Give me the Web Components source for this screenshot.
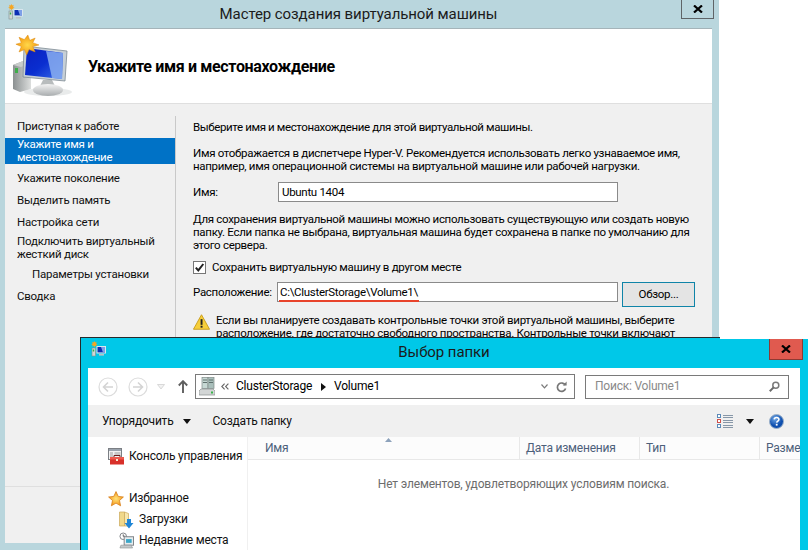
<!DOCTYPE html>
<html lang="ru">
<head>
<meta charset="utf-8">
<title>Мастер создания виртуальной машины</title>
<style>
  html, body { margin: 0; height: 100%; background: #fff; overflow: hidden; }
  body { position: relative; width: 808px; height: 550px; font: 11.5px/13px Roboto, "Open Sans", sans-serif; letter-spacing: -.3px; color: #000; }
</style>
</head>
<body>
<template id="wizard-tpl">
  <style>
    :host { position: absolute; left: 0; top: 0; width: 719px; height: 550px; box-sizing: border-box; display: flex; flex-direction: column; background: #b9d6dd; padding: 0 7px 7px 5px; }
    .title { height: 28px; flex: none; display: flex; align-items: center; justify-content: center; position: relative; font-size: 15px; letter-spacing: -.08px; color: #1b1b1b; }
    .app { position: absolute; left: 3px; top: 4px; }
    .close { position: absolute; right: -2px; top: 0; width: 33px; height: 19px; box-sizing: border-box; border: 1px solid #5f6467; border-top: 0; display: flex; align-items: center; justify-content: center; }
    .client { flex: 1; display: flex; flex-direction: column; border-top: 1px solid #a5b4b9; background: #f0f0f0; }
    header { height: 74px; flex: none; background: #fff; border-bottom: 1px solid #dfdfdf; display: flex; align-items: center; padding-left: 7px; font: bold 16px/18px Roboto, sans-serif; letter-spacing: -.35px; }
    .body { flex: 1; display: flex; padding-top: 12px; border-bottom: 1px solid #dfdfdf; margin-bottom: 56px; }
    nav { width: 170px; flex: none; padding-top: 4px; }
    main { flex: 1; border-left: 1px solid #c9c9c9; padding: 5px 0 0 17px; }
  </style>
  <div class="title">
    <ui-icon class="app" name="vm-small"></ui-icon>
    Мастер создания виртуальной машины
    <div class="close"><ui-icon name="close"></ui-icon></div>
  </div>
  <div class="client">
    <header><ui-icon name="vm-large" style="margin-top:-1px"></ui-icon><span style="margin:2px 0 0 14px">Укажите имя и местонахождение</span></header>
    <div class="body">
      <nav><slot name="nav"></slot></nav>
      <main><slot></slot></main>
    </div>
  </div>
</template>

<template id="nav-tpl">
  <style>
    :host { display: block; width: 170px; box-sizing: border-box; padding: 0 4px 0 12px; line-height: 13px; letter-spacing: -.22px; color: #111; white-space: nowrap; }
    :host([selected]) { background: #0072c6; color: #fff; }
    :host([sub]) { padding-left: 27px; }
  </style>
  <slot></slot>
</template>

<template id="field-tpl">
  <style>
    :host { display: flex; align-items: flex-start; }
    label { width: 85px; flex: none; line-height: 20px; }
    .box { width: 340px; height: 20px; box-sizing: border-box; border: 1px solid #8a8a8a; background: #fff; padding-left: 3px; line-height: 18px; position: relative; white-space: nowrap; }
    .extra { margin-left: 4px; }
    :host([wide]) label { width: 84px; }
    :host([wide]) .box { width: 341px; padding-left: 2px; }
  </style>
  <label><slot name="label"></slot></label>
  <div class="box"><slot></slot></div>
  <div class="extra"><slot name="extra"></slot></div>
</template>

<template id="folder-tpl">
  <style>
    :host { position: absolute; left: 80px; top: 337px; width: 728px; height: 213px; box-sizing: border-box; display: flex; flex-direction: column; background: #00c8e8; padding: 1px 8px 0 7px; border-left: 1px solid #252a2c; font-size: 12px; letter-spacing: -.22px; }
    .edge { position: absolute; left: 0; top: 0; width: 639px; height: 1px; background: #252a2c; }
    .blank { position: absolute; left: 639px; top: 0; right: 0; height: 2px; background: #fff; }
    .title { height: 30px; flex: none; display: flex; align-items: center; justify-content: center; position: relative; font-size: 15px; letter-spacing: -.08px; color: #1b1b1b; padding-bottom: 1px; box-sizing: border-box; }
    .app { position: absolute; left: 3px; top: 3px; }
    .close { position: absolute; right: -3px; top: 1px; width: 34px; height: 21px; box-sizing: border-box; background: #e05a4f; border: 1px solid #8d3a33; border-top: 0; display: flex; align-items: center; justify-content: center; }
    .client { flex: 1; background: #fff; display: flex; flex-direction: column; min-height: 0; }
    .nav { height: 37px; flex: none; display: flex; align-items: center; padding-left: 10px; }
    .nav .fwd { margin-left: 10px; }
    .nav .drop { margin-left: 9px; }
    .nav .up { margin-left: 13px; margin-right: 7px; }
    .addr { width: 380px; height: 25px; box-sizing: border-box; border: 1px solid #7a7a7a; display: flex; align-items: center; padding-left: 3px; }
    .addr .t { margin-left: 7px; }
    .addr .sp { flex: 1; }
    .search { width: 204px; height: 24px; box-sizing: border-box; border: 1px solid #7a7a7a; margin-left: 10px; display: flex; align-items: center; justify-content: space-between; padding: 0 8px 0 9px; color: #8a8a8a; }
    .cmd { height: 32px; flex: none; background: #f0f0f0; display: flex; align-items: center; padding-left: 14px; color: #111; }
    .cmd .tri { margin-left: 10px; margin-right: 21px; }
    .cmd .right { margin-left: auto; display: flex; align-items: center; padding-right: 16px; }
    .panes { flex: 1; display: flex; min-height: 0; }
    .tree { width: 159px; flex: none; border-right: 1px solid #f0f0f0; overflow: hidden; }
    .list { flex: 1; min-width: 0; position: relative; overflow: hidden; }
    .cols { display: flex; height: 23px; box-sizing: border-box; border-bottom: 1px solid #e8e8e8; background: #fcfcfc; color: #4c607a; }
    .empty { text-align: center; margin-top: 18px; color: #6d6d6d; padding-right: 1px; letter-spacing: -.16px; }
    .sort { position: absolute; left: 137px; top: 1px; }
  </style>
  <div class="edge"></div><div class="blank"></div>
  <div class="title">
    <ui-icon class="app" name="vm-small"></ui-icon>
    Выбор папки
    <div class="close"><ui-icon name="close"></ui-icon></div>
  </div>
  <div class="client">
    <div class="nav">
      <ui-icon name="back"></ui-icon>
      <ui-icon class="fwd" name="forward"></ui-icon>
      <ui-icon class="drop" name="drop"></ui-icon>
      <ui-icon class="up" name="up"></ui-icon>
      <div class="addr">
        <ui-icon name="server"></ui-icon>
        <ui-icon name="chevrons" style="margin-left:6px"></ui-icon>
        <span class="t">ClusterStorage</span>
        <ui-icon name="crumb" style="margin:0 8px 0 9px"></ui-icon>
        <span>Volume1</span>
        <span class="sp"></span>
        <ui-icon name="chevron"></ui-icon>
        <ui-icon name="refresh" style="margin:0 7px 0 8px"></ui-icon>
      </div>
      <div class="search"><span>Поиск: Volume1</span><ui-icon name="search"></ui-icon></div>
    </div>
    <div class="cmd">
      <span>Упорядочить</span><ui-icon class="tri" name="tri"></ui-icon><span>Создать папку</span>
      <div class="right">
        <ui-icon name="views"></ui-icon>
        <ui-icon name="tri" style="margin:0 15px 0 13px"></ui-icon>
        <ui-icon name="help"></ui-icon>
      </div>
    </div>
    <div class="panes">
      <div class="tree"><slot name="tree"></slot></div>
      <div class="list">
        <ui-icon class="sort" name="sort"></ui-icon>
        <div class="cols"><slot name="cols"></slot></div>
        <div class="empty"><slot></slot></div>
      </div>
    </div>
  </div>
</template>

<template id="col-tpl">
  <style>
    :host { display: block; flex: none; box-sizing: border-box; border-right: 1px solid #e8e8e8; padding: 5px 0 0 6px; white-space: nowrap; overflow: hidden; }
    :host(:last-child) { border-right: 0; }
  </style>
  <slot></slot>
</template>

<template id="tree-tpl">
  <style>
    :host { display: flex; align-items: center; height: 21px; white-space: nowrap; padding-left: 20px; color: #111; }
    :host([child]) { padding-left: 31px; }
    ui-icon { margin-right: 5px; }
  </style>
  <ui-icon></ui-icon><slot></slot>
</template>

<vm-wizard>
  <nav-item slot="nav">Приступая к работе</nav-item>
  <nav-item slot="nav" selected style="margin-top:5px">Укажите имя и<br>местонахождение</nav-item>
  <nav-item slot="nav" style="margin-top:8px">Укажите поколение</nav-item>
  <nav-item slot="nav" style="margin-top:9px">Выделить память</nav-item>
  <nav-item slot="nav" style="margin-top:9px">Настройка сети</nav-item>
  <nav-item slot="nav" style="margin-top:6px">Подключить виртуальный<br>жесткий диск</nav-item>
  <nav-item slot="nav" sub style="margin-top:7px">Параметры установки</nav-item>
  <nav-item slot="nav" style="margin-top:9px">Сводка</nav-item>

  <div style="margin:0 0 13px;letter-spacing:-.38px">Выберите имя и местонахождение для этой виртуальной машины.</div>
  <div style="margin:0 0 9px;white-space:nowrap">Имя отображается в диспетчере Hyper-V. Рекомендуется использовать легко узнаваемое имя,<br>например, имя операционной системы на виртуальной машине или рабочей нагрузки.</div>
  <form-field><span slot="label">Имя:</span>Ubuntu 1404</form-field>
  <div style="margin:11px 0 9px;white-space:nowrap">Для сохранения виртуальной машины можно использовать существующую или создать новую<br>папку. Если папка не выбрана, виртуальная машина будет сохранена в папке по умолчанию для<br>этого сервера.</div>
  <div style="display:flex;align-items:center;height:13px;margin-bottom:8px"><ui-icon name="check" style="margin-right:6px"></ui-icon>Сохранить виртуальную машину в другом месте</div>
  <form-field wide>
    <span slot="label">Расположение:</span>
    C:\ClusterStorage\Volume1\
    <red-mark></red-mark>
    <push-button slot="extra">Обзор...</push-button>
  </form-field>
  <div style="display:flex;margin-top:7px;white-space:nowrap"><ui-icon name="warn" style="margin-right:6px"></ui-icon><span>Если вы планируете создавать контрольные точки этой виртуальной машины, выберите<br>расположение, где достаточно свободного пространства. Контрольные точки включают</span></div>
</vm-wizard>

<folder-picker>
  <tree-item slot="tree" icon="console" style="margin-top:9px">Консоль управления</tree-item>
  <tree-item slot="tree" icon="star" style="margin-top:21px">Избранное</tree-item>
  <tree-item slot="tree" icon="downloads" child>Загрузки</tree-item>
  <tree-item slot="tree" icon="recent" child>Недавние места</tree-item>
  <col-head slot="cols" style="width:272px;padding-left:17px">Имя</col-head>
  <col-head slot="cols" style="width:120px">Дата изменения</col-head>
  <col-head slot="cols" style="width:120px">Тип</col-head>
  <col-head slot="cols" style="width:40px">Разме</col-head>
  Нет элементов, удовлетворяющих условиям поиска.
</folder-picker>

<script>
const ICONS = {
  close: `<svg width="10" height="8" viewBox="0 0 10 8"><path d="M1 .5 9 7.5M9 .5 1 7.5" stroke="#000" stroke-width="2.2" fill="none"/></svg>`,
  "vm-small": `<svg width="16" height="16" viewBox="0 0 16 16"><path d="M3 0l1 2 2-1-1 2 2 1-2 1 1 2-2-1-1 2-1-2-2 1 1-2-2-1 2-1-1-2 2 1z" fill="#f5a623" transform="translate(1 0) scale(.8)"/><rect x="1" y="7" width="3.5" height="8" fill="#cfd6d6" stroke="#80908e" stroke-width=".6"/><rect x="1.8" y="8.5" width="1.4" height="2" fill="#36b24a"/><rect x="5.5" y="5" width="9.5" height="7.5" fill="#d8e6ee"/><rect x="6.5" y="6" width="7.5" height="5.4" fill="#0b2fb4"/><path d="M10 6h4v5.4h-2z" fill="#7d9fe8"/><path d="M8 13h5v1.6H8z" fill="#b9c2c6"/></svg>`,
  "vm-large": `<svg width="62" height="64" viewBox="0 0 62 64">
    <defs>
      <linearGradient id="scr" x1="0" y1="0" x2="1" y2="1"><stop offset="0" stop-color="#0a1fc0"/><stop offset=".5" stop-color="#0a2ed0"/><stop offset="1" stop-color="#3a6fe8"/></linearGradient>
      <linearGradient id="tw" x1="0" y1="0" x2="1" y2="0"><stop offset="0" stop-color="#8b9091"/><stop offset="1" stop-color="#dcdedd"/></linearGradient>
      <radialGradient id="st"><stop offset="0" stop-color="#ffd84a"/><stop offset="1" stop-color="#f39a12"/></radialGradient>
      <linearGradient id="bs" x1="0" y1="0" x2="0" y2="1"><stop offset="0" stop-color="#f4f4f4"/><stop offset="1" stop-color="#a8acae"/></linearGradient>
    </defs>
    <ellipse cx="36" cy="58" rx="24" ry="4" fill="#e9ebeb"/>
    <path d="M1 31 11 27 19 29 19 55 8 58 1 55z" fill="url(#tw)"/>
    <path d="M1 31 11 27 19 29 9 33z" fill="#c8cccb"/>
    <rect x="3" y="34" width="3" height="5" fill="#3fae4b"/>
    <path d="M31 46h9l3 6H28z" fill="#b8bcbd"/>
    <ellipse cx="36" cy="56" rx="15" ry="6" fill="url(#bs)"/>
    <path d="M12 12 55 17 53 47 11 43z" fill="#c6cfd6" stroke="#7f8b94" stroke-width=".8"/>
    <path d="M15 14 51 19 50 45 13 41z" fill="url(#scr)"/>
    <path d="M34 17 51 19 50 45 40 44z" fill="#8aaef0" opacity=".85"/>
    <path d="M18.500 1 21 8 28 5 25 11 33 14 25 16 28 23 20 20 17 27 14 20 7 23 10 16 3 13 10 11 7 4 14 7z" fill="url(#st)" stroke="#d98a10" stroke-width=".6" transform="translate(1.600 .2) scale(.77)"/>
  </svg>`,
  check: `<svg width="13" height="13" viewBox="0 0 13 13"><rect x=".5" y=".5" width="12" height="12" fill="#fff" stroke="#777"/><path d="M2.800 6.600 5.300 9.400 10.300 3" stroke="#222" stroke-width="2" fill="none"/></svg>`,
  warn: `<svg width="17" height="16" viewBox="0 0 15 14"><path d="M7.500 .6 14.600 13.400H.4z" fill="#f7cf3a" stroke="#c79a18" stroke-width=".8" stroke-linejoin="round"/><rect x="6.700" y="4.500" width="1.700" height="5" fill="#222"/><rect x="6.700" y="10.300" width="1.700" height="1.700" fill="#222"/></svg>`,
  back: `<svg width="20" height="20" viewBox="0 0 20 20"><circle cx="10" cy="10" r="9" fill="#fff" stroke="#dcdcdc" stroke-width="1.200"/><path d="M15 10H6M10 5.500 5.500 10 10 14.500" fill="none" stroke="#d4d4d4" stroke-width="1.600"/></svg>`,
  forward: `<svg width="20" height="20" viewBox="0 0 20 20"><circle cx="10" cy="10" r="9" fill="#fff" stroke="#dcdcdc" stroke-width="1.200"/><path d="M5 10h9M10 5.500 14.500 10 10 14.500" fill="none" stroke="#d4d4d4" stroke-width="1.600"/></svg>`,
  drop: `<svg width="8" height="6" viewBox="0 0 8 6"><path d="M.5 .5h7L4 5z" fill="#f2f2f2" stroke="#d0d0d0" stroke-width=".8"/></svg>`,
  up: `<svg width="10" height="13" viewBox="0 0 10 13"><path d="M5 1.200V13M.8 5.500 5 1.200 9.200 5.500" fill="none" stroke="#5f5f5f" stroke-width="1.900"/></svg>`,
  server: `<svg width="16" height="19" viewBox="0 0 16 19"><rect x="3" y=".5" width="6" height="11" fill="#c6d8d4" stroke="#7f8a88" stroke-width=".7"/><rect x="9" y=".5" width="6" height="11" fill="#a9bfbb" stroke="#7f8a88" stroke-width=".7"/><path d="M4 3h4M4 5.500h4M10 3h4M10 5.500h4" stroke="#5f706d"/><path d="M2 12h12l2 2v4H0v-4z" fill="#d3d6d6" stroke="#8b8f90" stroke-width=".7"/><rect x="12" y="14.500" width="2" height="2" fill="#39b54a"/></svg>`,
  chevrons: `<svg width="8" height="7" viewBox="0 0 8 7"><path d="M3.600 .6.8 3.500l2.800 2.900M7.400 .6 4.600 3.500l2.800 2.900" fill="none" stroke="#666" stroke-width="1.100"/></svg>`,
  crumb: `<svg width="5" height="8" viewBox="0 0 5 8"><path d="M0 0l5 4-5 4z" fill="#111"/></svg>`,
  chevron: `<svg width="7" height="5" viewBox="0 0 7 5"><path d="M.5 .5 3.500 3.800 6.500 .5" fill="none" stroke="#7a7a7a" stroke-width="1.200"/></svg>`,
  refresh: `<svg width="11" height="12" viewBox="0 0 11 12"><path d="M9.300 4.200A4.200 4.200 0 1 0 9.600 7.500" fill="none" stroke="#777" stroke-width="1.700"/><path d="M6.800 4.400h3.800V.6z" fill="#777"/></svg>`,
  search: `<svg width="11" height="11" viewBox="0 0 11 11"><circle cx="6.800" cy="4.200" r="3" fill="none" stroke="#7a7a7a" stroke-width="1.500"/><path d="M4.600 6.400.8 10.200" stroke="#6a6a6a" stroke-width="2"/></svg>`,
  tri: `<svg width="8" height="5" viewBox="0 0 8 5"><path d="M0 0h8L4 5z" fill="#111"/></svg>`,
  views: `<svg width="16" height="14" viewBox="0 0 16 14"><g fill="#fff" stroke-width="1"><rect x=".5" y=".5" width="3" height="3" stroke="#5b8ab8"/><rect x=".5" y="5.500" width="3" height="3" stroke="#d0504a"/><rect x=".5" y="10.500" width="3" height="3" stroke="#5b8ab8"/></g><path d="M6 1.500h10M6 3.500h10M6 6.500h10M6 8.500h10M6 11.500h10M6 13.500h10" stroke="#8797a8"/></svg>`,
  help: `<svg width="15" height="15" viewBox="0 0 15 15"><defs><radialGradient id="hp" cx=".4" cy=".3"><stop offset="0" stop-color="#6fa8e8"/><stop offset="1" stop-color="#0f4fae"/></radialGradient></defs><circle cx="7.500" cy="7.500" r="7" fill="url(#hp)" stroke="#9eb2c8"/><path d="M5.200 5.400c.3-2.600 5-2.400 4.700.2-.2 1.400-2.100 1.500-2.200 3" fill="none" stroke="#fff" stroke-width="1.600"/><rect x="6.800" y="9.800" width="1.800" height="1.800" fill="#fff"/></svg>`,
  sort: `<svg width="7" height="4" viewBox="0 0 7 4"><path d="M3.500 0 7 4H0z" fill="#8da2bb"/></svg>`,
  console: `<svg width="16" height="17" viewBox="0 0 16 17"><rect x=".5" y=".5" width="13" height="11" fill="#f2f2f2" stroke="#7b7f84"/><rect x="1" y="1" width="12" height="2" fill="#9aa3ad"/><path d="M2 5h3M2 7h3M2 9h3M6.500 5h6M6.500 7h6" stroke="#9c9c9c"/><rect x="2" y="9" width="14" height="7.500" fill="#d8302a"/><rect x="2" y="9" width="14" height="2.500" fill="#ee5a4d"/><path d="M6 9V7.500h6V9" fill="none" stroke="#6c2220"/><rect x="8" y="11" width="2" height="2" fill="#f6e8d0"/></svg>`,
  star: `<svg width="16" height="16" viewBox="0 0 16 16"><defs><radialGradient id="fv"><stop offset="0" stop-color="#ffe27a"/><stop offset="1" stop-color="#f59a1b"/></radialGradient></defs><path d="M8 .6 10.200 5.400 15.400 6 11.500 9.500 12.600 14.800 8 12.100 3.400 14.800 4.500 9.500.6 6 5.800 5.400z" fill="url(#fv)" stroke="#d77f1a" stroke-width=".8" stroke-linejoin="round"/></svg>`,
  downloads: `<svg width="15" height="18" viewBox="0 0 15 18"><path d="M.5 1h5v14H.5z" fill="#f0d88a" stroke="#caa858" stroke-width=".7"/><path d="M5.500 1 9.500 2.500V15H5.500z" fill="#f7e7ae" stroke="#caa858" stroke-width=".7"/><path d="M8 8h4v4h2.500L10 17.500 5.500 12H8z" fill="#1f86d6"/></svg>`,
  recent: `<svg width="15" height="17" viewBox="0 0 16 17"><circle cx="4.500" cy="4" r="3.500" fill="#fff" stroke="#7b7f84"/><path d="M4.500 2v2h2" stroke="#555" fill="none"/><rect x="5.500" y="4.500" width="10" height="9" fill="#e6ecee" stroke="#7b7f84"/><rect x="7.500" y="7" width="6" height="4" fill="#3aa6c8"/><path d="M2 13.500h11l1.500 3H1z" fill="#c4c9cb" stroke="#868b8d" stroke-width=".6"/></svg>`
};

class UiIcon extends HTMLElement {
  connectedCallback() {
    if (this.shadowRoot) return;
    this.attachShadow({ mode: "open" });
    this.render();
  }
  static get observedAttributes() { return ["name"]; }
  attributeChangedCallback() { if (this.shadowRoot) this.render(); }
  render() {
    this.shadowRoot.innerHTML = `<style>:host{display:inline-flex;flex:none;line-height:0}</style>${ICONS[this.getAttribute("name")] || ""}`;
  }
}

function fromTemplate(id) {
  return class extends HTMLElement {
    constructor() {
      super();
      this.attachShadow({ mode: "open" }).append(document.getElementById(id).content.cloneNode(true));
    }
  };
}

class TreeItem extends fromTemplate("tree-tpl") {
  connectedCallback() {
    this.shadowRoot.querySelector("ui-icon").setAttribute("name", this.getAttribute("icon"));
  }
}

class PushButton extends HTMLElement {
  constructor() {
    super();
    this.attachShadow({ mode: "open" }).innerHTML = `<style>
      :host { display: flex; align-items: center; justify-content: center; width: 73px; height: 25px; box-sizing: border-box; border: 1px solid #0f84a8; background: #e4e4e4; }
    </style><slot></slot>`;
  }
}

class RedMark extends HTMLElement {
  constructor() {
    super();
    this.attachShadow({ mode: "open" }).innerHTML = `<style>
      :host { position: absolute; left: 1px; top: 17px; width: 140px; height: 2px; background: #e8432b; }
    </style>`;
  }
}

customElements.define("ui-icon", UiIcon);
customElements.define("vm-wizard", fromTemplate("wizard-tpl"));
customElements.define("nav-item", fromTemplate("nav-tpl"));
customElements.define("form-field", fromTemplate("field-tpl"));
customElements.define("folder-picker", fromTemplate("folder-tpl"));
customElements.define("col-head", fromTemplate("col-tpl"));
customElements.define("tree-item", TreeItem);
customElements.define("push-button", PushButton);
customElements.define("red-mark", RedMark);
</script>
</body>
</html>
